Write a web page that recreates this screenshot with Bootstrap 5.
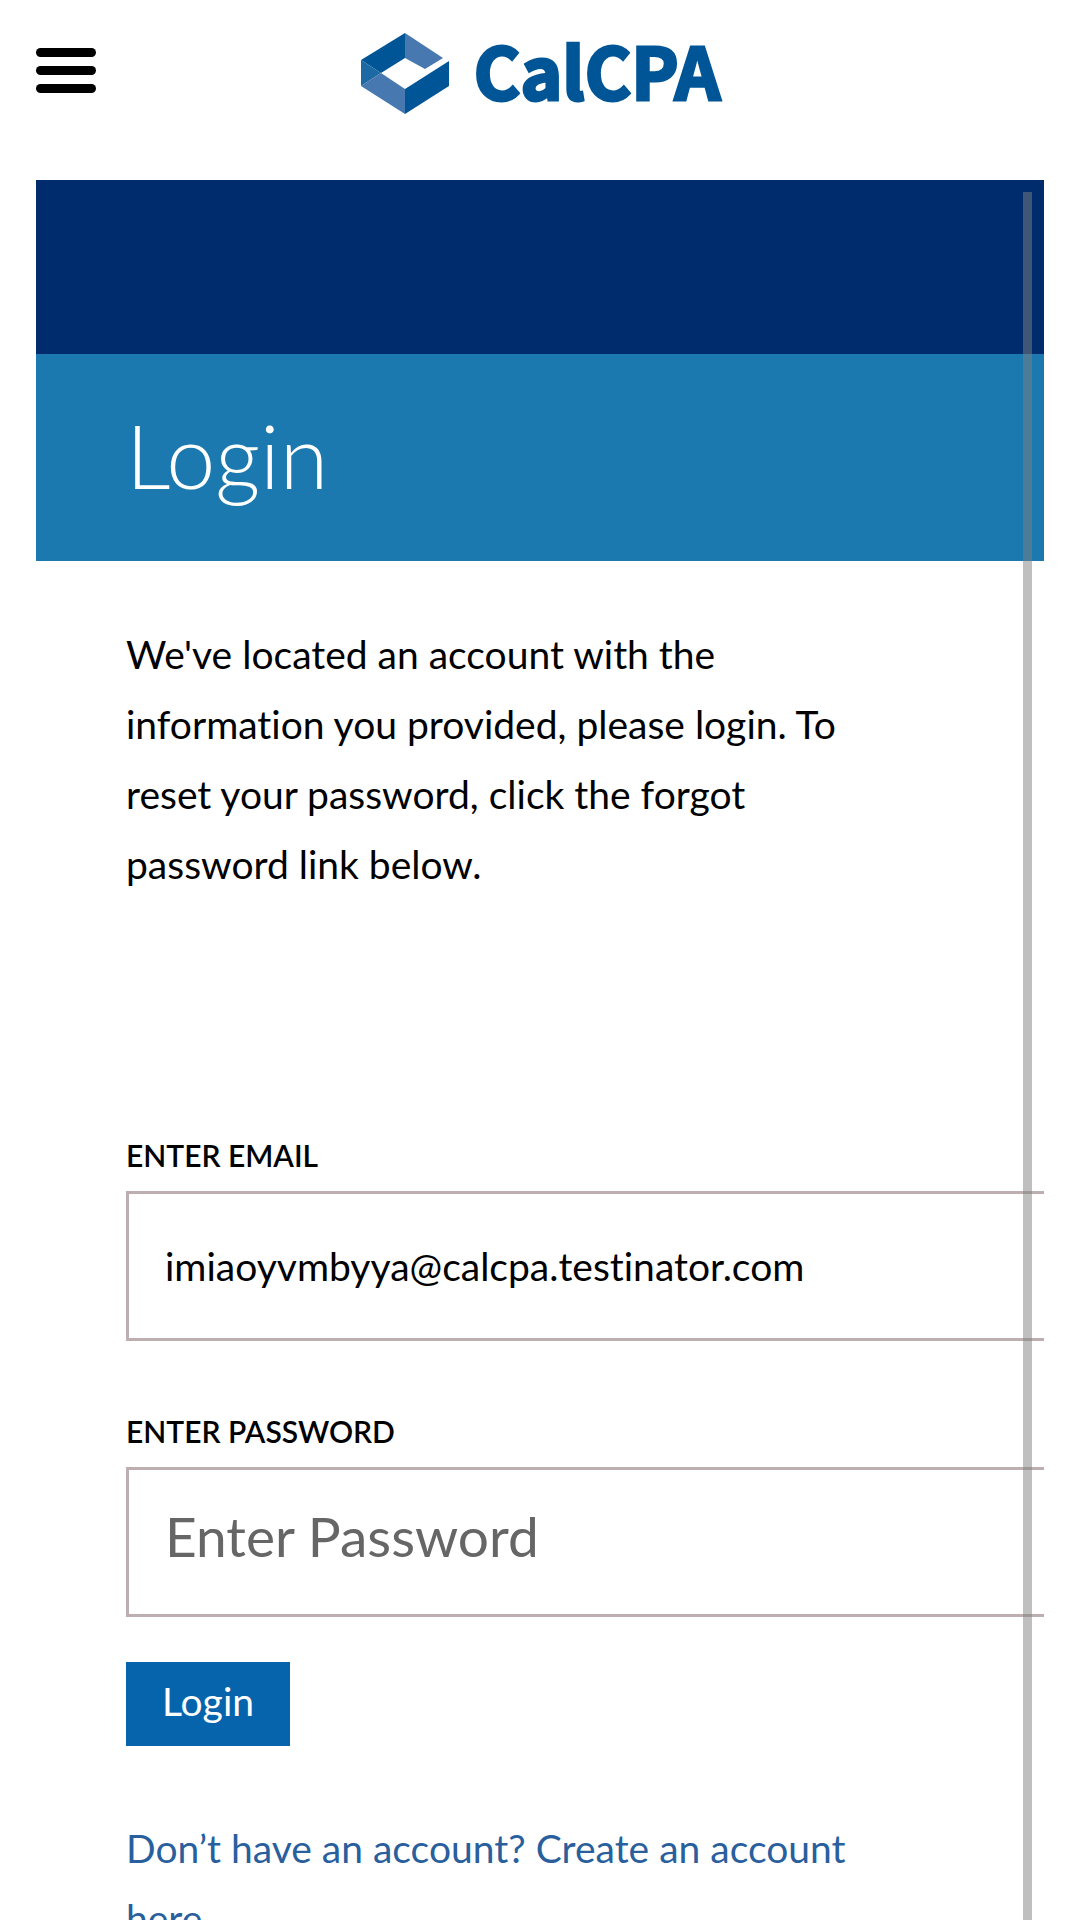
<!DOCTYPE html>
<html lang="en">
<head>
<meta charset="utf-8">
<meta name="viewport" content="width=device-width, initial-scale=1">
<title>Login - CalCPA</title>
<link href="https://cdn.jsdelivr.net/npm/bootstrap@5.3.0/dist/css/bootstrap.min.css" rel="stylesheet">
<style>
  body { font-family: Lato, sans-serif; font-size: 39px; line-height: 70px; font-variant-ligatures: none; color: #000; background: #fff; }
  .page-shell { padding: 0 36px; }
  .site-header { height: 180px; padding-top: 33px; }
  .menu-btn { width: 60px; height: 45px; left: 0; top: 48px; }
  .menu-btn span { height: 9px; border-radius: 5px; background: #000; }
  .brand { gap: 24px; height: 82px; color: #005596; }
  .brand-name { font-family: "Noto Sans CJK SC", "Liberation Sans", sans-serif; font-weight: 700; font-size: 71px; line-height: 72px; -webkit-text-stroke: 3px #005596; }
  .hero-dark { height: 174px; background: #002c6e; }
  .hero-title { padding: 49px 90px 54px; background: #1b79b0; color: #fff; }
  .hero-title h1 { font-size: 88px; font-weight: 300; line-height: 104px; }
  .content { padding: 58px 0 0 90px; }
  .copy { padding-right: 150px; }
  .intro { margin-bottom: 238px; }
  .field { margin-bottom: 72px; }
  .field-last { margin-bottom: 45px; }
  .field-label { font-size: 30px; line-height: 36px; font-weight: 600; margin-bottom: 18px; }
  .field-box, .field-box:focus { height: 150px; padding: 0 36px; font-size: 39px; font-variant-ligatures: none; color: #000; background: #fff; border: 3px solid #bdaeb0; border-right: 0; }
  .field-box::placeholder { font-size: 55px; color: #666; }
  .btn-login { padding: 15px 36px 21px; font-size: 39px; line-height: 48px; border: 0; background: #0664ad; color: #fff; }
  .signup { margin-top: 67px; }
  .signup a { color: #2a5f9e; }
  .scroll-thumb { top: 12px; right: 12px; bottom: 0; width: 9px; background: rgba(128, 128, 128, .5); }
</style>
</head>
<body>
<div class="page-shell vh-100 d-flex flex-column overflow-hidden">
  <header class="site-header position-relative d-flex justify-content-center align-items-start flex-shrink-0">
    <button type="button" class="menu-btn btn p-0 border-0 position-absolute d-flex flex-column justify-content-between align-items-stretch" aria-label="Menu">
      <span></span><span></span><span></span>
    </button>
    <a href="#" class="brand d-flex align-items-start text-decoration-none">
      <svg width="90" height="82" viewBox="0 0 90 82" aria-hidden="true">
        <path fill="#4878b0" d="M45 0 83 25 65 36 45 25Z"/>
        <path fill="#005596" d="M45 0V25L21 40 1 27Z"/>
        <path fill="#1c69a4" d="M1 27 21 40 1 53Z"/>
        <path fill="#4878b0" d="M21 40 45 56V81L1 53Z"/>
        <path fill="#005596" d="M45 56 89 28V53L45 81Z"/>
      </svg>
      <span class="brand-name">CalCPA</span>
    </a>
  </header>
  <main class="position-relative flex-grow-1 overflow-hidden">
    <div class="hero-dark"></div>
    <div class="hero-title"><h1 class="m-0">Login</h1></div>
    <div class="content">
      <p class="intro copy">We've located an account with the information you provided, please login. To reset your password, click the forgot password link below.</p>
      <form>
        <div class="field">
          <label for="email" class="field-label d-block text-uppercase">Enter Email</label>
          <input type="email" id="email" class="field-box form-control rounded-0 shadow-none" value="imiaoyvmbyya@calcpa.testinator.com">
        </div>
        <div class="field-last">
          <label for="password" class="field-label d-block text-uppercase">Enter Password</label>
          <input type="password" id="password" class="field-box form-control rounded-0 shadow-none" placeholder="Enter Password">
        </div>
        <button type="submit" class="btn-login btn rounded-0 d-block">Login</button>
      </form>
      <p class="signup copy mb-0"><a href="#" class="text-decoration-none">Don’t have an account? Create an account here</a></p>
    </div>
    <div class="scroll-thumb position-absolute"></div>
  </main>
</div>
<script src="https://cdn.jsdelivr.net/npm/bootstrap@5.3.0/dist/js/bootstrap.bundle.min.js"></script>
</body>
</html>
